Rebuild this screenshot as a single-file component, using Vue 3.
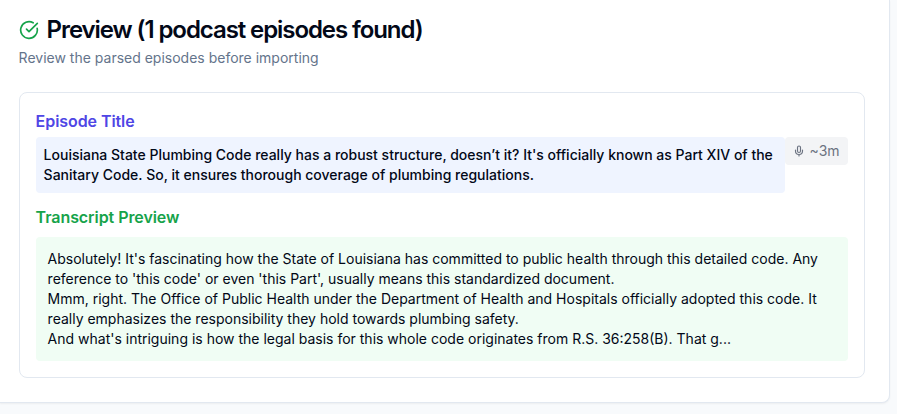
<script setup>
const episodes = [
  {
    title: "Louisiana State Plumbing Code really has a robust structure, doesn’t it? It's officially known as Part XIV of the Sanitary Code. So, it ensures thorough coverage of plumbing regulations.",
    duration: '~3m',
    transcript: [
      "Absolutely! It's fascinating how the State of Louisiana has committed to public health through this detailed code. Any reference to 'this code' or even 'this Part', usually means this standardized document.",
      'Mmm, right. The Office of Public Health under the Department of Health and Hospitals officially adopted this code. It really emphasizes the responsibility they hold towards plumbing safety.',
      "And what's intriguing is how the legal basis for this whole code originates from R.S. 36:258(B). That g...",
    ],
  },
]
</script>

<template>
  <main class="page">
    <section class="card">
      <header>
        <h2 class="heading">
          <svg class="check" viewBox="0 0 24 24"><path d="M21.801 10A10 10 0 1 1 17 3.335" /><path d="m9 11 3 3L22 4" /></svg>
          <span>Preview ({{ episodes.length }} podcast episodes found)</span>
        </h2>
        <p class="sub">Review the parsed episodes before importing</p>
      </header>
      <article v-for="episode in episodes" :key="episode.title" class="episode">
        <div class="top">
          <div class="main">
            <h3 class="label indigo">Episode Title</h3>
            <p class="title">{{ episode.title }}</p>
          </div>
          <div class="badge">
            <svg class="mic" viewBox="0 0 24 24"><path d="M12 2a3 3 0 0 0-3 3v7a3 3 0 0 0 6 0V5a3 3 0 0 0-3-3Z" /><path d="M19 10v2a7 7 0 0 1-14 0v-2M12 19v3" /></svg>
            <span>{{ episode.duration }}</span>
          </div>
        </div>
        <h3 class="label green">Transcript Preview</h3>
        <div class="transcript">
          <p v-for="line in episode.transcript" :key="line">{{ line }}</p>
        </div>
      </article>
    </section>
  </main>
</template>

<style>
body { margin: 0; background: #f8fafc; overflow: hidden; }
</style>

<style scoped>
* { box-sizing: border-box; }
h2, h3, p { margin: 0; }
.page { height: 414px; font-family: Inter, sans-serif; color: #020817; }
.card {
  width: 889.6px; height: 403px; padding: 13px 24px 24px 18.6px;
  background: #fff; border: 1px solid #e2e8f0; border-width: 0 1px 1px 0;
  border-bottom-right-radius: 8px; box-shadow: 0 1px 2px rgb(0 0 0 / 5%);
}
.heading { display: flex; align-items: center; gap: 8px; height: 34px; font-size: 24px; font-weight: 560; line-height: 34px; letter-spacing: -1.08px; white-space: nowrap; }
svg { fill: none; stroke: currentColor; stroke-width: 2; stroke-linecap: round; stroke-linejoin: round; flex: none; }
.check { width: 20px; height: 20px; color: #16a34a; }
.sub { margin-top: 1px; font-size: 14px; line-height: 20px; color: #64748b; }
.episode { margin-top: 24px; height: 286px; padding: 16px; border: 1px solid #e2e8f0; border-radius: 8px; }
.top { display: flex; align-items: flex-start; }
.main { flex: 1; }
.label { font-size: 16px; font-weight: 600; line-height: 24px; letter-spacing: -0.07px; }
.indigo { color: #4f46e5; }
.green { margin-top: 12px; color: #16a34a; }
.title { margin-top: 4px; padding: 8px; background: #eff4ff; border-radius: 4px; font-size: 14px; font-weight: 500; line-height: 20px; }
.badge { display: flex; align-items: center; gap: 4px; height: 28px; margin-top: 28px; padding: 0 8px 0 8.6px; border-radius: 4px; background: #f3f4f6; color: #6b7280; font-size: 14px; line-height: 20px; }
.mic { width: 12px; height: 12px; margin-left: -0.6px; margin-right: 0.6px; stroke-width: 2.3; }
.transcript { margin-top: 8px; padding: 12px; background: #f0fdf4; border-radius: 4px; font-size: 14px; line-height: 20px; }
</style>
